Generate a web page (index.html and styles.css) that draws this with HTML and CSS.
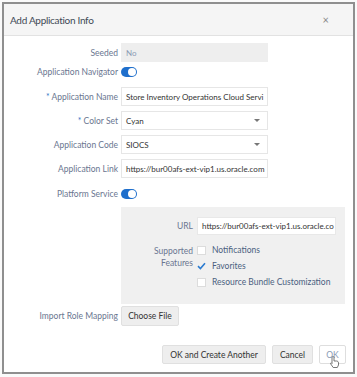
FILE: index.html
```html
<!DOCTYPE html>
<html lang="en">
<head>
  <meta charset="UTF-8">
  <title>Add Application Info</title>
  <link rel="stylesheet" href="styles.css">
</head>
<body>

<div class="dialog">
  <div class="dialog-header">
    <h1>Add Application Info</h1>
    <span class="close">&times;</span>
  </div>

  <div class="dialog-body">
    <div class="row row-seeded">
      <label>Seeded</label>
      <div class="field readonly">No</div>
    </div>
    <div class="row row-toggle">
      <label>Application Navigator</label>
      <span class="toggle"></span>
    </div>
    <div class="row row-field">
      <label><span class="req">*</span> Application Name</label>
      <div class="field">Store Inventory Operations Cloud Servi</div>
    </div>
    <div class="row row-field">
      <label><span class="req">*</span> Color Set</label>
      <div class="field select">Cyan <span class="caret"></span></div>
    </div>
    <div class="row row-field">
      <label>Application Code</label>
      <div class="field select">SIOCS <span class="caret"></span></div>
    </div>
    <div class="row row-field">
      <label>Application Link</label>
      <div class="field">https://bur00afs-ext-vip1.us.oracle.com</div>
    </div>
    <div class="row row-toggle row-platform">
      <label>Platform Service</label>
      <span class="toggle"></span>
    </div>

    <div class="panel">
      <div class="panel-row">
        <label>URL</label>
        <div class="field url">https://bur00afs-ext-vip1.us.oracle.co</div>
      </div>
      <div class="panel-row features">
        <label>Supported<br>Features</label>
        <div class="checks">
          <div class="check"><span class="box"></span>Notifications</div>
          <div class="check"><span class="box checked"><svg width="9" height="8" viewBox="0 0 9 8"><path d="M1 4.2 L3.4 6.5 L8 1.2" fill="none" stroke="#2b7bd0" stroke-width="1.6"/></svg></span>Favorites</div>
          <div class="check"><span class="box"></span>Resource Bundle Customization</div>
        </div>
      </div>
    </div>

    <div class="row row-import">
      <label>Import Role Mapping</label>
      <button class="btn">Choose File</button>
    </div>
  </div>

  <div class="dialog-footer">
    <button class="btn">OK and Create Another</button>
    <button class="btn">Cancel</button>
    <button class="btn btn-ok">OK
      <svg class="cursor" width="9" height="12" viewBox="0 0 9 12"><path d="M3 0.5 C3.8 0.5 4 1 4 1.6 V5 H6.5 C7.5 5 8.5 5.6 8.5 7 V9 L7.3 11.5 H3.2 L0.6 7.8 C0.3 7.2 0.9 6.6 1.5 7 L2 7.5 V1.6 C2 1 2.3 0.5 3 0.5 Z" fill="#fff" stroke="#555" stroke-width="0.8"/></svg>
    </button>
  </div>
</div>

</body>
</html>
```

FILE: styles.css
```css
/* Dialog */
* { box-sizing: border-box; margin: 0; padding: 0; }
body { background: #fafafa; font-family: Lato, "Open Sans", Arial, sans-serif; font-size: 8.5px; color: #333; }
.dialog { margin: 2px; width: 353px; height: 372px; border: 2px solid #8f8f8f; background: #fff; display: flex; flex-direction: column; }

.dialog-header { height: 32px; background: #f5f5f5; border-bottom: 1px solid #e2e2e2; display: flex; align-items: center; justify-content: space-between; padding: 0 24px 0 6px; }
.dialog-header h1 { font-size: 10px; font-weight: normal; color: #3f4a55; letter-spacing: -0.3px; }
.close { font-size: 11px; color: #888; }

.dialog-body { padding-top: 7px; }
.row { display: flex; align-items: center; }
.row label { width: 117px; text-align: right; padding-right: 3px; color: #6a7690; white-space: nowrap; }
.req { color: #3178c6; }
.row-seeded { height: 19px; }
.row-toggle { height: 20px; }
.row-field { height: 19px; margin-top: 5px; }
.row-platform { margin-top: 6px; }

.field { width: 147px; height: 19px; border: 1px solid #e6e6e6; background: #fff; padding: 0 4px; display: flex; align-items: center; white-space: nowrap; overflow: hidden; color: #333; font-size: 8px; }
.field.readonly { background: #eeeeee; border-color: #eeeeee; color: #8a9ab4; }
.field.select { justify-content: space-between; }
.caret { width: 0; height: 0; border-left: 3px solid transparent; border-right: 3px solid transparent; border-top: 3px solid #777; margin-right: 3px; }

.toggle { width: 16px; height: 10px; border-radius: 5px; background: #1f6fcc; position: relative; }
.toggle::after { content: ""; position: absolute; right: 1px; top: 1px; width: 8px; height: 8px; border-radius: 50%; background: #fff; }

.panel { margin: 3px 0 0 117px; width: 224px; height: 97px; background: #f0f0f0; padding-top: 10px; }
.panel-row { display: flex; }
.panel-row label { width: 76px; text-align: right; padding-right: 4px; color: #6a7690; }
.panel-row:first-child { align-items: center; }
.field.url { width: 139px; height: 18px; border-color: #e8e8e8; }
.features { margin-top: 10px; }
.features label { line-height: 12px; padding-top: 0; }
.checks { display: flex; flex-direction: column; gap: 6px; }
.check { display: flex; align-items: center; height: 10px; color: #4b5f80; }
.box { width: 9px; height: 9px; background: #fff; border: 1px solid #dcdcdc; margin-right: 6px; display: flex; align-items: center; justify-content: center; }
.box.checked { border: none; background: none; }

.row-import { margin-top: 2px; height: 20px; }
.btn { font-family: inherit; font-size: 8.5px; color: #333; background: #eeeeee; border: 1px solid #e0e0e0; border-radius: 2px; height: 20px; padding: 0 7px; white-space: nowrap; }
.row-import .btn { width: 58px; padding: 0; }

.dialog-footer { margin-top: auto; display: flex; justify-content: flex-end; gap: 6px; padding: 0 7px 8px 0; }
.dialog-footer .btn { height: 19px; }
.btn-ok { background: #fff; border-color: #dedede; color: #8a9ab4; width: 27px; padding: 0; position: relative; }
.cursor { position: absolute; left: 10px; top: 10px; }
```
